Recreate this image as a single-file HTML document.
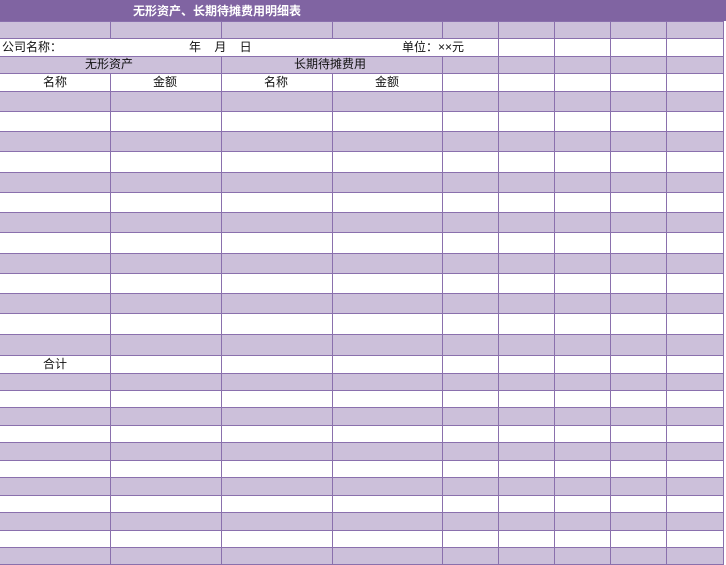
<!DOCTYPE html>
<html><head><meta charset="utf-8"><style>
body{margin:0;width:726px;height:550px;overflow:hidden;background:#fff;position:relative;font-family:"Liberation Sans","Noto Sans CJK SC",sans-serif;font-size:12px;color:#111}
table{position:absolute;left:0;top:21px;border-collapse:collapse;table-layout:fixed;width:723px}
td{padding:0;border:1px solid #8a70ad;border-left:none;font-size:1px;line-height:1px}
tr:nth-child(odd) td{background:#ccc0da}
.t{position:absolute;white-space:nowrap;line-height:14px}
.c{font-family:"Noto Sans CJK SC",sans-serif}
</style></head><body>
<table>
<colgroup><col style="width:110px"><col style="width:111px"><col style="width:111px"><col style="width:110px"><col style="width:56px"><col style="width:56px"><col style="width:56px"><col style="width:56px"><col style="width:57px"></colgroup>
<tr style="height:17px"><td></td><td></td><td></td><td></td><td></td><td></td><td></td><td></td><td></td></tr>
<tr style="height:18px"><td colspan="5"></td><td></td><td></td><td></td><td></td></tr>
<tr style="height:17px"><td colspan="2"></td><td colspan="2"></td><td></td><td></td><td></td><td></td><td></td></tr>
<tr style="height:18px"><td></td><td></td><td></td><td></td><td></td><td></td><td></td><td></td><td></td></tr>
<tr style="height:20px"><td></td><td></td><td></td><td></td><td></td><td></td><td></td><td></td><td></td></tr>
<tr style="height:20px"><td></td><td></td><td></td><td></td><td></td><td></td><td></td><td></td><td></td></tr>
<tr style="height:20px"><td></td><td></td><td></td><td></td><td></td><td></td><td></td><td></td><td></td></tr>
<tr style="height:21px"><td></td><td></td><td></td><td></td><td></td><td></td><td></td><td></td><td></td></tr>
<tr style="height:20px"><td></td><td></td><td></td><td></td><td></td><td></td><td></td><td></td><td></td></tr>
<tr style="height:20px"><td></td><td></td><td></td><td></td><td></td><td></td><td></td><td></td><td></td></tr>
<tr style="height:20px"><td></td><td></td><td></td><td></td><td></td><td></td><td></td><td></td><td></td></tr>
<tr style="height:21px"><td></td><td></td><td></td><td></td><td></td><td></td><td></td><td></td><td></td></tr>
<tr style="height:20px"><td></td><td></td><td></td><td></td><td></td><td></td><td></td><td></td><td></td></tr>
<tr style="height:20px"><td></td><td></td><td></td><td></td><td></td><td></td><td></td><td></td><td></td></tr>
<tr style="height:20px"><td></td><td></td><td></td><td></td><td></td><td></td><td></td><td></td><td></td></tr>
<tr style="height:21px"><td></td><td></td><td></td><td></td><td></td><td></td><td></td><td></td><td></td></tr>
<tr style="height:21px"><td></td><td></td><td></td><td></td><td></td><td></td><td></td><td></td><td></td></tr>
<tr style="height:18px"><td></td><td></td><td></td><td></td><td></td><td></td><td></td><td></td><td></td></tr>
<tr style="height:17px"><td></td><td></td><td></td><td></td><td></td><td></td><td></td><td></td><td></td></tr>
<tr style="height:17px"><td></td><td></td><td></td><td></td><td></td><td></td><td></td><td></td><td></td></tr>
<tr style="height:18px"><td></td><td></td><td></td><td></td><td></td><td></td><td></td><td></td><td></td></tr>
<tr style="height:17px"><td></td><td></td><td></td><td></td><td></td><td></td><td></td><td></td><td></td></tr>
<tr style="height:18px"><td></td><td></td><td></td><td></td><td></td><td></td><td></td><td></td><td></td></tr>
<tr style="height:17px"><td></td><td></td><td></td><td></td><td></td><td></td><td></td><td></td><td></td></tr>
<tr style="height:18px"><td></td><td></td><td></td><td></td><td></td><td></td><td></td><td></td><td></td></tr>
<tr style="height:17px"><td></td><td></td><td></td><td></td><td></td><td></td><td></td><td></td><td></td></tr>
<tr style="height:18px"><td></td><td></td><td></td><td></td><td></td><td></td><td></td><td></td><td></td></tr>
<tr style="height:17px"><td></td><td></td><td></td><td></td><td></td><td></td><td></td><td></td><td></td></tr>
<tr style="height:17px"><td></td><td></td><td></td><td></td><td></td><td></td><td></td><td></td><td></td></tr>
</table>
<div style="position:absolute;left:0;top:0;width:726px;height:21px;background:#8064a2"></div>
<div class="t" style="left:133px;top:4px;color:#fff;font-weight:bold">无形资产、长期待摊费用明细表</div>
<div class="t" style="left:2px;top:40px">公司名称<span class="c">：</span></div>
<div class="t" style="left:189px;top:40px">年&nbsp;&nbsp;&nbsp;&nbsp;月&nbsp;&nbsp;&nbsp;&nbsp;日</div>
<div class="t" style="left:402px;top:40px">单位<span class="c">：</span>××元</div>
<div class="t" style="left:85px;top:57px">无形资产</div>
<div class="t" style="left:294px;top:57px">长期待摊费用</div>
<div class="t" style="left:43px;top:75px">名称</div>
<div class="t" style="left:153px;top:75px">金额</div>
<div class="t" style="left:264px;top:75px">名称</div>
<div class="t" style="left:375px;top:75px">金额</div>
<div class="t" style="left:43px;top:357px">合计</div>
</body></html>
